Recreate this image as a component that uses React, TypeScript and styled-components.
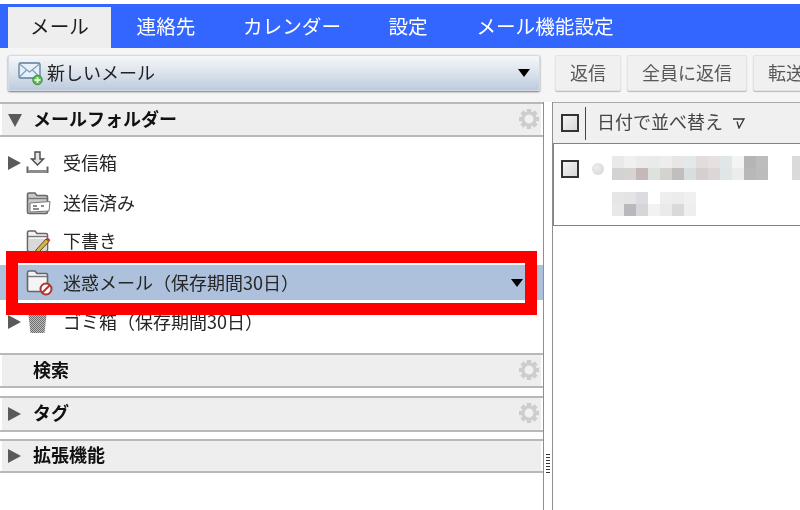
import React from "react";
import styled, { createGlobalStyle } from "styled-components";

const Global = createGlobalStyle`
  html, body { margin: 0; padding: 0; background: #fff; }
  body { font-family: "Noto Sans CJK JP", "Noto Sans", sans-serif; }
  * { box-sizing: border-box; }
`;

const Page = styled.div`
  position: relative;
  width: 800px;
  height: 510px;
  overflow: hidden;
  padding-top: 4px;
  background: #fff;
  display: flex;
  flex-direction: column;
  filter: blur(0.3px);
`;
const NavBar = styled.nav`
  height: 44px;
  background: #3366ff;
  display: flex;
  align-items: flex-end;
  padding-left: 8px;
  flex: none;
`;
const NavTab = styled.div<{ $active?: boolean; $width: number }>`
  width: ${(p) => p.$width}px;
  height: 41px;
  display: flex;
  align-items: center;
  justify-content: center;
  font-size: 19.6px;
  line-height: 1;
  padding-bottom: 4px;
  color: ${(p) => (p.$active ? "#1c1c1c" : "#ffffff")};
  background: ${(p) => (p.$active ? "#eeeeee" : "transparent")};
`;
const Toolbar = styled.div`
  height: 54px;
  flex: none;
  background: #f5f5f5;
  display: flex;
  gap: 6px;
  padding: 7px 0 0 8px;
  overflow: hidden;
`;
const NewMail = styled.div`
  width: 532px;
  height: 36px;
  margin-right: 9px;
  flex: none;
  border-radius: 2px;
  background: linear-gradient(#f4f6f9, #dfe5ee 45%, #bccbde);
  border: 1px solid #d5dbe3;
  box-shadow: 0 1px 2px #777;
  display: flex;
  align-items: center;
  padding: 0 9px 0 9px;
  font-size: 18px;
  color: #222;
  gap: 4px;
`;
const NewMailLabel = styled.span`
  margin-bottom: 2px;
`;
const Spacer = styled.span`
  flex: 1;
`;
const ToolButton = styled.div<{ $width: number }>`
  width: ${(p) => p.$width}px;
  height: 36px;
  flex: none;
  background: #f0f0f0;
  border: 1px solid #e3e3e3;
  box-shadow: 0 1px 1px #bbb;
  border-radius: 2px;
  display: flex;
  align-items: center;
  font-size: 18px;
  color: #595959;
  justify-content: center;
  white-space: nowrap;
  overflow: hidden;
  padding: 0 0 2px;
`;
const Main = styled.div`
  flex: 1;
  display: flex;
  min-height: 0;
`;
const Sidebar = styled.aside`
  width: 544px;
  flex: none;
  border-right: 1px solid #8f8f8f;
  background: #fff;
`;
const SectionHeader = styled.div<{ $mt?: number; $height: number }>`
  height: ${(p) => p.$height}px;
  margin-top: ${(p) => p.$mt ?? 0}px;
  border-top: 2px solid #b8b8b8;
  border-bottom: 2px solid #b8b8b8;
  background: #eeeeee;
  box-shadow: inset 2px 0 #fff, inset -2px 0 #fff;
  display: flex;
  align-items: center;
  padding: 0 4px 0 8px;
  font-size: 18px;
  font-weight: 700;
  color: #111;
`;
const SectionLabel = styled.span`
  margin-bottom: 4px;
`;
const GearSlot = styled.span`
  display: flex;
  margin-bottom: 2px;
`;
const HeaderArrow = styled.span`
  width: 25px;
  flex: none;
  display: flex;
`;
const FolderList = styled.div`
  height: 216px;
  padding-top: 6px;
`;
const FolderRow = styled.div<{ $height: number; $selected?: boolean; $mt?: number }>`
  height: ${(p) => p.$height}px;
  margin-top: ${(p) => p.$mt ?? 0}px;
  display: flex;
  align-items: center;
  font-size: 18px;
  color: #262626;
  background: ${(p) => (p.$selected ? "#adc1dc" : "transparent")};
  padding-right: 20px;
  white-space: nowrap;
`;
const RowLabel = styled.span`
  margin-bottom: 2px;
`;
const RowArrow = styled.span`
  width: 24px;
  flex: none;
  padding-left: 8px;
  display: flex;
`;
const RowIcon = styled.span`
  width: 37px;
  margin-left: 2px;
  flex: none;
  display: flex;
`;
const Splitter = styled.div`
  width: 9px;
  flex: none;
  background: #fff;
  border-right: 1px solid #8f8f8f;
  display: flex;
  align-items: flex-end;
  justify-content: center;
  padding-bottom: 35px;
`;
const Grip = styled.div`
  width: 4px;
  height: 21px;
  background: repeating-linear-gradient(#333 0 1px, transparent 1px 3px);
`;
const ListPane = styled.section`
  flex: 1;
  min-width: 0;
`;
const ListHeader = styled.div`
  height: 41px;
  border-top: 1px solid #a9a9a9;
  background: #f0f0f0;
  display: flex;
  align-items: center;
  padding-left: 8px;
  font-size: 18px;
  color: #444;
`;
const ListHeaderLabel = styled.span`
  margin: 0 9px 4px 0;
`;
const Check = styled.span`
  width: 18px;
  height: 18px;
  flex: none;
  border: 2px solid #333;
  background: linear-gradient(135deg, #f4f4f4, #d8d8d8);
`;
const HeaderDivider = styled.span`
  width: 1px;
  height: 33px;
  background: #444;
  margin: 0 11px 0 6px;
`;
const MailItem = styled.div`
  height: 83px;
  border: 1px solid #6f879c;
  border-right: none;
  background: #fff;
  padding: 16px 0 0 7px;
  display: flex;
  gap: 13px;
  position: relative;
`;
const UnreadDot = styled.span`
  width: 12px;
  height: 12px;
  flex: none;
  margin: 3px -5px 0 0;
  border-radius: 50%;
  background: radial-gradient(circle at 40% 40%, #eee, #d2d2d2);
`;
const RedMark = styled.div`
  position: absolute;
  left: 6px;
  top: 251px;
  width: 531px;
  height: 64px;
  border: 12px solid #ff0000;
  pointer-events: none;
`;
const MosaicStack = styled.div`
  display: flex;
  flex-direction: column;
  gap: 12px;
  margin-top: -4px;
`;
const EdgeBlur = styled.span`
  position: absolute;
  left: 238px;
  top: 12px;
  width: 12px;
  height: 24px;
  background: #dcdad8;
`;

const Tri = ({ dir = "right", color = "#5a5a5a" }: { dir?: "right" | "down"; color?: string }) =>
  dir === "right" ? (
    <svg width="13" height="14" viewBox="0 0 13 14"><path d="M0 0 13 7 0 14Z" fill={color} /></svg>
  ) : (
    <svg width="14" height="14" viewBox="0 0 14 14"><path d="M0 1H14L7 14Z" fill={color} /></svg>
  );

const Caret = () => (
  <svg width="12" height="8" viewBox="0 0 12 8"><path d="M0 0H12L6 8Z" fill="#000" /></svg>
);

const Gear = () => (
  <svg width="20" height="20" viewBox="0 0 20 20">
    <g fill="#cdcdcd">
      {[0, 45, 90, 135, 180, 225, 270, 315].map((a) => (
        <rect key={a} x="7.8" y="0" width="4.4" height="5" transform={`rotate(${a} 10 10)`} />
      ))}
    </g>
    <circle cx="10" cy="10" r="6" fill="none" stroke="#cdcdcd" strokeWidth="3" />
    <circle cx="10" cy="10" r="3.8" fill="#f1f1f1" />
  </svg>
);

const MailPlus = () => (
  <svg width="25" height="25" viewBox="0 0 25 25">
    <rect x="1" y="2" width="21" height="15" rx="1.5" fill="#e6f0fa" stroke="#5d7d9b" strokeWidth="1.3" />
    <path d="M1.5 3 11.5 11 21.5 3M1.5 16 8.5 9M21.5 16 14.5 9" fill="none" stroke="#7f9ab3" strokeWidth="1.1" />
    <circle cx="19.5" cy="19" r="4.8" fill="#53b948" stroke="#2e7d2a" strokeWidth=".7" />
    <path d="M19.5 16v6M16.5 19h6" stroke="#e9ffe2" strokeWidth="1.8" />
  </svg>
);

const Inbox = () => (
  <svg width="23" height="24" viewBox="0 0 23 24">
    <path d="M9 1h5v7h3.500l-6 6-6-6H9Z" fill="#e4e4e4" stroke="#4a4a4a" strokeWidth="1.4" />
    <path d="M1.500 15.500v5.500h20v-5.500" fill="none" stroke="#666" strokeWidth="2" />
    <path d="M2 20.500h19" stroke="#8c8c8c" strokeWidth="3" />
  </svg>
);

const folderBase = (
  <>
    <path d="M1.5 21V3.500c0-1 .6-1.500 1.500-1.500h6l2 2.500h9c1 0 1.500.5 1.500 1.500V21c0 .8-.5 1.500-1.500 1.500H3c-1 0-1.500-.7-1.500-1.500Z" fill="#f4f4f4" stroke="#666" strokeWidth="1.6" />
    <path d="M2 7.500h19.500" stroke="#777" strokeWidth="1.4" />
  </>
);

const Sent = () => (
  <svg width="25" height="24" viewBox="0 0 25 24">
    <path d="M1.5 21V3.500c0-1 .6-1.500 1.500-1.500h6l2 2.500h9c1 0 1.500.5 1.500 1.500V21c0 .8-.5 1.500-1.500 1.500H3c-1 0-1.500-.7-1.500-1.500Z" fill="#c9c9c9" stroke="#666" strokeWidth="1.6" />
    <path d="M2 7.500h19.500" stroke="#777" strokeWidth="1.4" />
    <path d="M4 12 24 10.500 23 20 4 21Z" fill="#fff" stroke="#777" />
    <path d="M7 15h4M7 18h6M15 15h3" stroke="#666" strokeWidth="1.3" />
  </svg>
);

const Draft = () => (
  <svg width="25" height="24" viewBox="0 0 25 24">
    {folderBase}
    <path d="M3 10h18v11H3Z" fill="#d9d9d9" />
    <path d="M10 21 20 10l3 2.500L13 23l-4 1Z" fill="#d8b34a" stroke="#5a4a20" />
    <path d="M20 10l1.500-1.500 3 2.500-1.500 1.500Z" fill="#c73a3a" />
  </svg>
);

const Spam = () => (
  <svg width="27" height="27" viewBox="0 0 27 27">
    {folderBase}
    <circle cx="20" cy="20" r="5.5" fill="#fff" stroke="#b3332f" strokeWidth="2" />
    <path d="M16.500 23.500 23.500 16.500" stroke="#b3332f" strokeWidth="2" />
  </svg>
);

const Trash = () => (
  <svg width="23" height="24" viewBox="0 0 23 24">
    <defs>
      <pattern id="dither" width="2" height="2" patternUnits="userSpaceOnUse">
        <rect width="2" height="2" fill="#bdbdbd" />
        <rect width="1" height="1" fill="#6f6f6f" />
        <rect x="1" y="1" width="1" height="1" fill="#6f6f6f" />
      </pattern>
    </defs>
    <path d="M2 1H21L18.500 23H4.500Z" fill="url(#dither)" />
  </svg>
);

const SortMark = () => (
  <svg width="13" height="11" viewBox="0 0 13 11">
    <path d="M1 1H12L7 10 5 3.500" fill="none" stroke="#333" strokeWidth="1.3" />
  </svg>
);

const cell = 12;
const Mosaic = ({ rows }: { rows: string[][] }) => (
  <svg width={rows[0].length * cell} height={rows.length * cell} style={{ display: "block" }}>
    {rows.flatMap((r, j) =>
      r.map((c, i) => <rect key={`${i}-${j}`} x={i * cell} y={j * cell} width={cell} height={cell} fill={c} />)
    )}
  </svg>
);

const line1 = [
  ["#e9e9e9", "#f0f0f0", "#ebebeb", "#eaeaea", "#ededed", "#e6e6e6", "#e3e8ea", "#e3dcdc", "#e6e0e0", "#e1e6e8", "#f4f4f4", "#b5b5b5", "#bdbdbd"],
  ["#d4d2d2", "#d6d3d3", "#c4b8b8", "#dde2de", "#d5d2cf", "#c0bebe", "#d8dee0", "#d5cfcf", "#dcd6d6", "#e0e5e7", "#ececec", "#b8b8b8", "#bcbcbc"],
];
const line2 = [
  ["#e6e6e6", "#e4e4e4", "#dcdce0", "#ffffff", "#eeeeee", "#ececec", "#f0f0f0"],
  ["#e8e8e8", "#b9b9bb", "#d5d5da", "#f2f2f2", "#eaeaea", "#d9d9d9", "#eeeeee"],
];

export default function App() {
  return (
    <Page>
      <Global />
      <NavBar>
        <NavTab $active $width={103}>メール</NavTab>
        <NavTab $width={110}>連絡先</NavTab>
        <NavTab $width={142}>カレンダー</NavTab>
        <NavTab $width={90}>設定</NavTab>
        <NavTab $width={184}>メール機能設定</NavTab>
      </NavBar>
      <Toolbar>
        <NewMail>
          <MailPlus />
          <NewMailLabel>新しいメール</NewMailLabel>
          <Spacer />
          <Caret />
        </NewMail>
        <ToolButton $width={66}>返信</ToolButton>
        <ToolButton $width={120}>全員に返信</ToolButton>
        <ToolButton $width={66}>転送</ToolButton>
      </Toolbar>
      <Main>
        <Sidebar>
          <SectionHeader $height={35}>
            <HeaderArrow><Tri dir="down" /></HeaderArrow>
            <SectionLabel>メールフォルダー</SectionLabel>
            <Spacer />
            <GearSlot><Gear /></GearSlot>
          </SectionHeader>
          <FolderList>
            <FolderRow $height={40}>
              <RowArrow><Tri /></RowArrow>
              <RowIcon><Inbox /></RowIcon>
              <RowLabel>受信箱</RowLabel>
            </FolderRow>
            <FolderRow $height={40}>
              <RowArrow />
              <RowIcon><Sent /></RowIcon>
              <RowLabel>送信済み</RowLabel>
            </FolderRow>
            <FolderRow $height={36}>
              <RowArrow />
              <RowIcon><Draft /></RowIcon>
              <RowLabel>下書き</RowLabel>
            </FolderRow>
            <FolderRow $height={35} $mt={6} $selected>
              <RowArrow />
              <RowIcon><Spam /></RowIcon>
              <RowLabel>迷惑メール（保存期間30日）</RowLabel>
              <Spacer />
              <Caret />
            </FolderRow>
            <FolderRow $height={36} $mt={4}>
              <RowArrow><Tri /></RowArrow>
              <RowIcon><Trash /></RowIcon>
              <RowLabel>ゴミ箱（保存期間30日）</RowLabel>
            </FolderRow>
          </FolderList>
          <SectionHeader $height={35}>
            <HeaderArrow />
            <SectionLabel>検索</SectionLabel>
            <Spacer />
            <GearSlot><Gear /></GearSlot>
          </SectionHeader>
          <SectionHeader $height={36} $mt={8}>
            <HeaderArrow><Tri /></HeaderArrow>
            <SectionLabel>タグ</SectionLabel>
            <Spacer />
            <GearSlot><Gear /></GearSlot>
          </SectionHeader>
          <SectionHeader $height={34} $mt={7}>
            <HeaderArrow><Tri /></HeaderArrow>
            <SectionLabel>拡張機能</SectionLabel>
          </SectionHeader>
        </Sidebar>
        <Splitter><Grip /></Splitter>
        <ListPane>
          <ListHeader>
            <Check />
            <HeaderDivider />
            <ListHeaderLabel>日付で並べ替え</ListHeaderLabel>
            <SortMark />
          </ListHeader>
          <MailItem>
            <Check />
            <UnreadDot />
            <MosaicStack>
              <Mosaic rows={line1} />
              <Mosaic rows={line2} />
            </MosaicStack>
            <EdgeBlur />
          </MailItem>
        </ListPane>
      </Main>
      <RedMark />
    </Page>
  );
}
